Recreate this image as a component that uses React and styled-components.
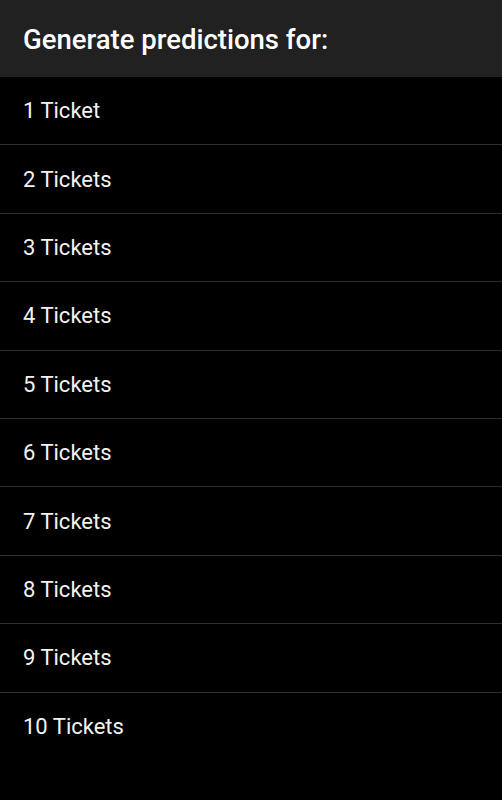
import React from 'react'
import styled, { createGlobalStyle } from 'styled-components';

const GlobalStyle = createGlobalStyle`
  html, body {
    margin: 0;
    padding: 0;
    background: #000000;
  }
  body {
    font-family: Roboto, "Noto Sans", Arial, sans-serif;
  }
`;

const Screen = styled.div`
  width: 502px;
  height: 800px;
  background: #000000;
  display: flex;
  flex-direction: column;
  overflow: hidden;
`;

const Header = styled.div`
  height: 77px;
  background: #212121;
  display: flex;
  align-items: center;
  padding: 0 23px;
  box-sizing: border-box;
`;

const Title = styled.div`
  font-size: 27.5px;
  font-weight: 500;
  color: #ffffff;
  margin-top: 1px;
`;

const List = styled.div`
  display: flex;
  flex-direction: column;
`;

const Row = styled.div`
  height: 68.4px;
  box-sizing: border-box;
  display: flex;
  align-items: center;
  padding: 0 23px;
  font-size: 22px;
  color: #f2f2f2;
  border-bottom: 1px solid ${({ $last }) => ($last ? 'transparent' : '#2e2e2e')};
`;

const counts = [1, 2, 3, 4, 5, 6, 7, 8, 9, 10];

const App = () => {
  return (
    <Screen>
      <GlobalStyle />
      <Header>
        <Title>Generate predictions for:</Title>
      </Header>
      <List>
        {counts.map((n, index) => (
          <Row key={n} $last={index === counts.length - 1}>
            {n === 1 ? '1 Ticket' : `${n} Tickets`}
          </Row>
        ))}
      </List>
    </Screen>
  )
}

export default App
